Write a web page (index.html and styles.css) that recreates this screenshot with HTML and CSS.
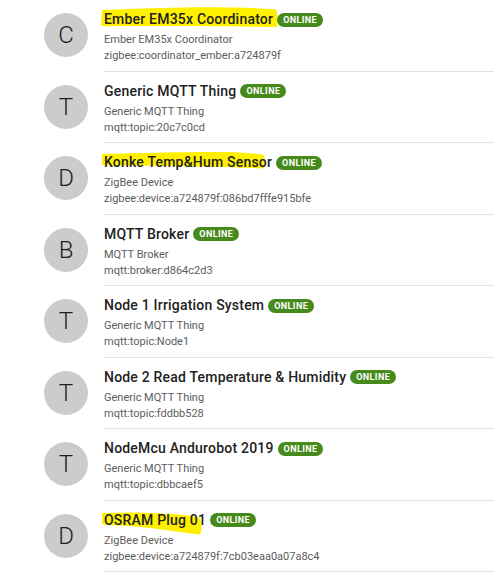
FILE: index.html
```html
<!DOCTYPE html>
<html>
<head>
<meta charset="utf-8">
<link rel="stylesheet" href="styles.css">
</head>
<body>
<ul class="list">
  <li class="row">
    <div class="avatar">C</div>
    <div class="content">
      <div class="title">
        <svg class="hl" width="182" height="24" viewBox="-4 -2 182 24"><path d="M-2 1 C20 0 50 -1 80 -1.5 C120 -2 150 -1 171 0 C173 1 174 4 173 18 C140 17.5 80 17 20 17 C4 17 -2 18 -3 16 Z" fill="#fff000"/></svg>
        <span class="name">Ember EM35x Coordinator</span><span class="badge">ONLINE</span>
      </div>
      <div class="sub">Ember EM35x Coordinator</div>
      <div class="sub">zigbee:coordinator_ember:a724879f</div>
    </div>
  </li>
  <li class="row">
    <div class="avatar">T</div>
    <div class="content">
      <div class="title"><span class="name">Generic MQTT Thing</span><span class="badge">ONLINE</span></div>
      <div class="sub">Generic MQTT Thing</div>
      <div class="sub">mqtt:topic:20c7c0cd</div>
    </div>
  </li>
  <li class="row">
    <div class="avatar">D</div>
    <div class="content">
      <div class="title">
        <svg class="hl" width="182" height="24" viewBox="-8 -2 182 24"><path d="M-6 2 C30 1 70 0 110 0 C130 0 145 1 156 3 C157 7 157 12 156 16.5 C125 15 80 14 30 13.5 C10 13.5 -2 14 -6 13 Z" fill="#fff000"/></svg>
        <span class="name">Konke Temp&amp;Hum Sensor</span><span class="badge">ONLINE</span>
      </div>
      <div class="sub">ZigBee Device</div>
      <div class="sub">zigbee:device:a724879f:086bd7fffe915bfe</div>
    </div>
  </li>
  <li class="row">
    <div class="avatar">B</div>
    <div class="content">
      <div class="title"><span class="name">MQTT Broker</span><span class="badge">ONLINE</span></div>
      <div class="sub">MQTT Broker</div>
      <div class="sub">mqtt:broker:d864c2d3</div>
    </div>
  </li>
  <li class="row">
    <div class="avatar">T</div>
    <div class="content">
      <div class="title"><span class="name">Node 1 Irrigation System</span><span class="badge">ONLINE</span></div>
      <div class="sub">Generic MQTT Thing</div>
      <div class="sub">mqtt:topic:Node1</div>
    </div>
  </li>
  <li class="row">
    <div class="avatar">T</div>
    <div class="content">
      <div class="title"><span class="name">Node 2 Read Temperature &amp; Humidity</span><span class="badge">ONLINE</span></div>
      <div class="sub">Generic MQTT Thing</div>
      <div class="sub">mqtt:topic:fddbb528</div>
    </div>
  </li>
  <li class="row">
    <div class="avatar">T</div>
    <div class="content">
      <div class="title"><span class="name">NodeMcu Andurobot 2019</span><span class="badge">ONLINE</span></div>
      <div class="sub">Generic MQTT Thing</div>
      <div class="sub">mqtt:topic:dbbcaef5</div>
    </div>
  </li>
  <li class="row">
    <div class="avatar">D</div>
    <div class="content">
      <div class="title">
        <svg class="hl" width="110" height="30" viewBox="-6 -2 110 30"><path d="M-4 3 C20 2 45 2.5 65 4 C80 5 90 6.5 94 8 C96 12 96 20 94 24.5 C80 23 55 19 30 16.5 C10 15 -2 15.5 -4 14 Z" fill="#fff000"/></svg>
        <span class="name">OSRAM Plug 01</span><span class="badge">ONLINE</span>
      </div>
      <div class="sub">ZigBee Device</div>
      <div class="sub">zigbee:device:a724879f:7cb03eaa0a07a8c4</div>
    </div>
  </li>
</ul>
</body>
</html>
```

FILE: styles.css
```css
html, body {
  margin: 0;
  padding: 0;
  background: #ffffff;
}
body {
  font-family: Roboto, "Noto Sans", sans-serif;
  color: #212121;
}
.list {
  list-style: none;
  margin: 0;
  padding: 0;
}
.row {
  display: flex;
  height: 71.5px;
}
.avatar {
  flex: 0 0 44px;
  width: 44px;
  height: 44px;
  margin: 13px 16px 0 44px;
  border-radius: 50%;
  background: #cccccc;
  color: #1c1c2a;
  font-size: 24px;
  font-weight: 300;
  display: flex;
  align-items: center;
  justify-content: center;
  line-height: 1;
}
.content {
  flex: 1;
  border-bottom: 1px solid #e3e3e3;
  padding-top: 9px;
  box-sizing: border-box;
}
.title {
  position: relative;
  display: flex;
  align-items: center;
  height: 20px;
  font-size: 14px;
  font-weight: 500;
  line-height: 20px;
  letter-spacing: 0.2px;
  color: #222222;
}
.hl {
  position: absolute;
  left: -4px;
  top: -2px;
  z-index: 0;
}
.name {
  position: relative;
  z-index: 1;
}
.badge {
  position: relative;
  z-index: 1;
  margin-left: 4px;
  margin-top: 1px;
  height: 14px;
  padding: 0 6px;
  border-radius: 7px;
  background: #478a1c;
  color: #ffffff;
  font-size: 9px;
  font-weight: 700;
  line-height: 14px;
  letter-spacing: 0.4px;
}
.sub {
  font-size: 11px;
  line-height: 16px;
  color: #5c5c5c;
}
.title + .sub {
  margin-top: 3px;
}
```
